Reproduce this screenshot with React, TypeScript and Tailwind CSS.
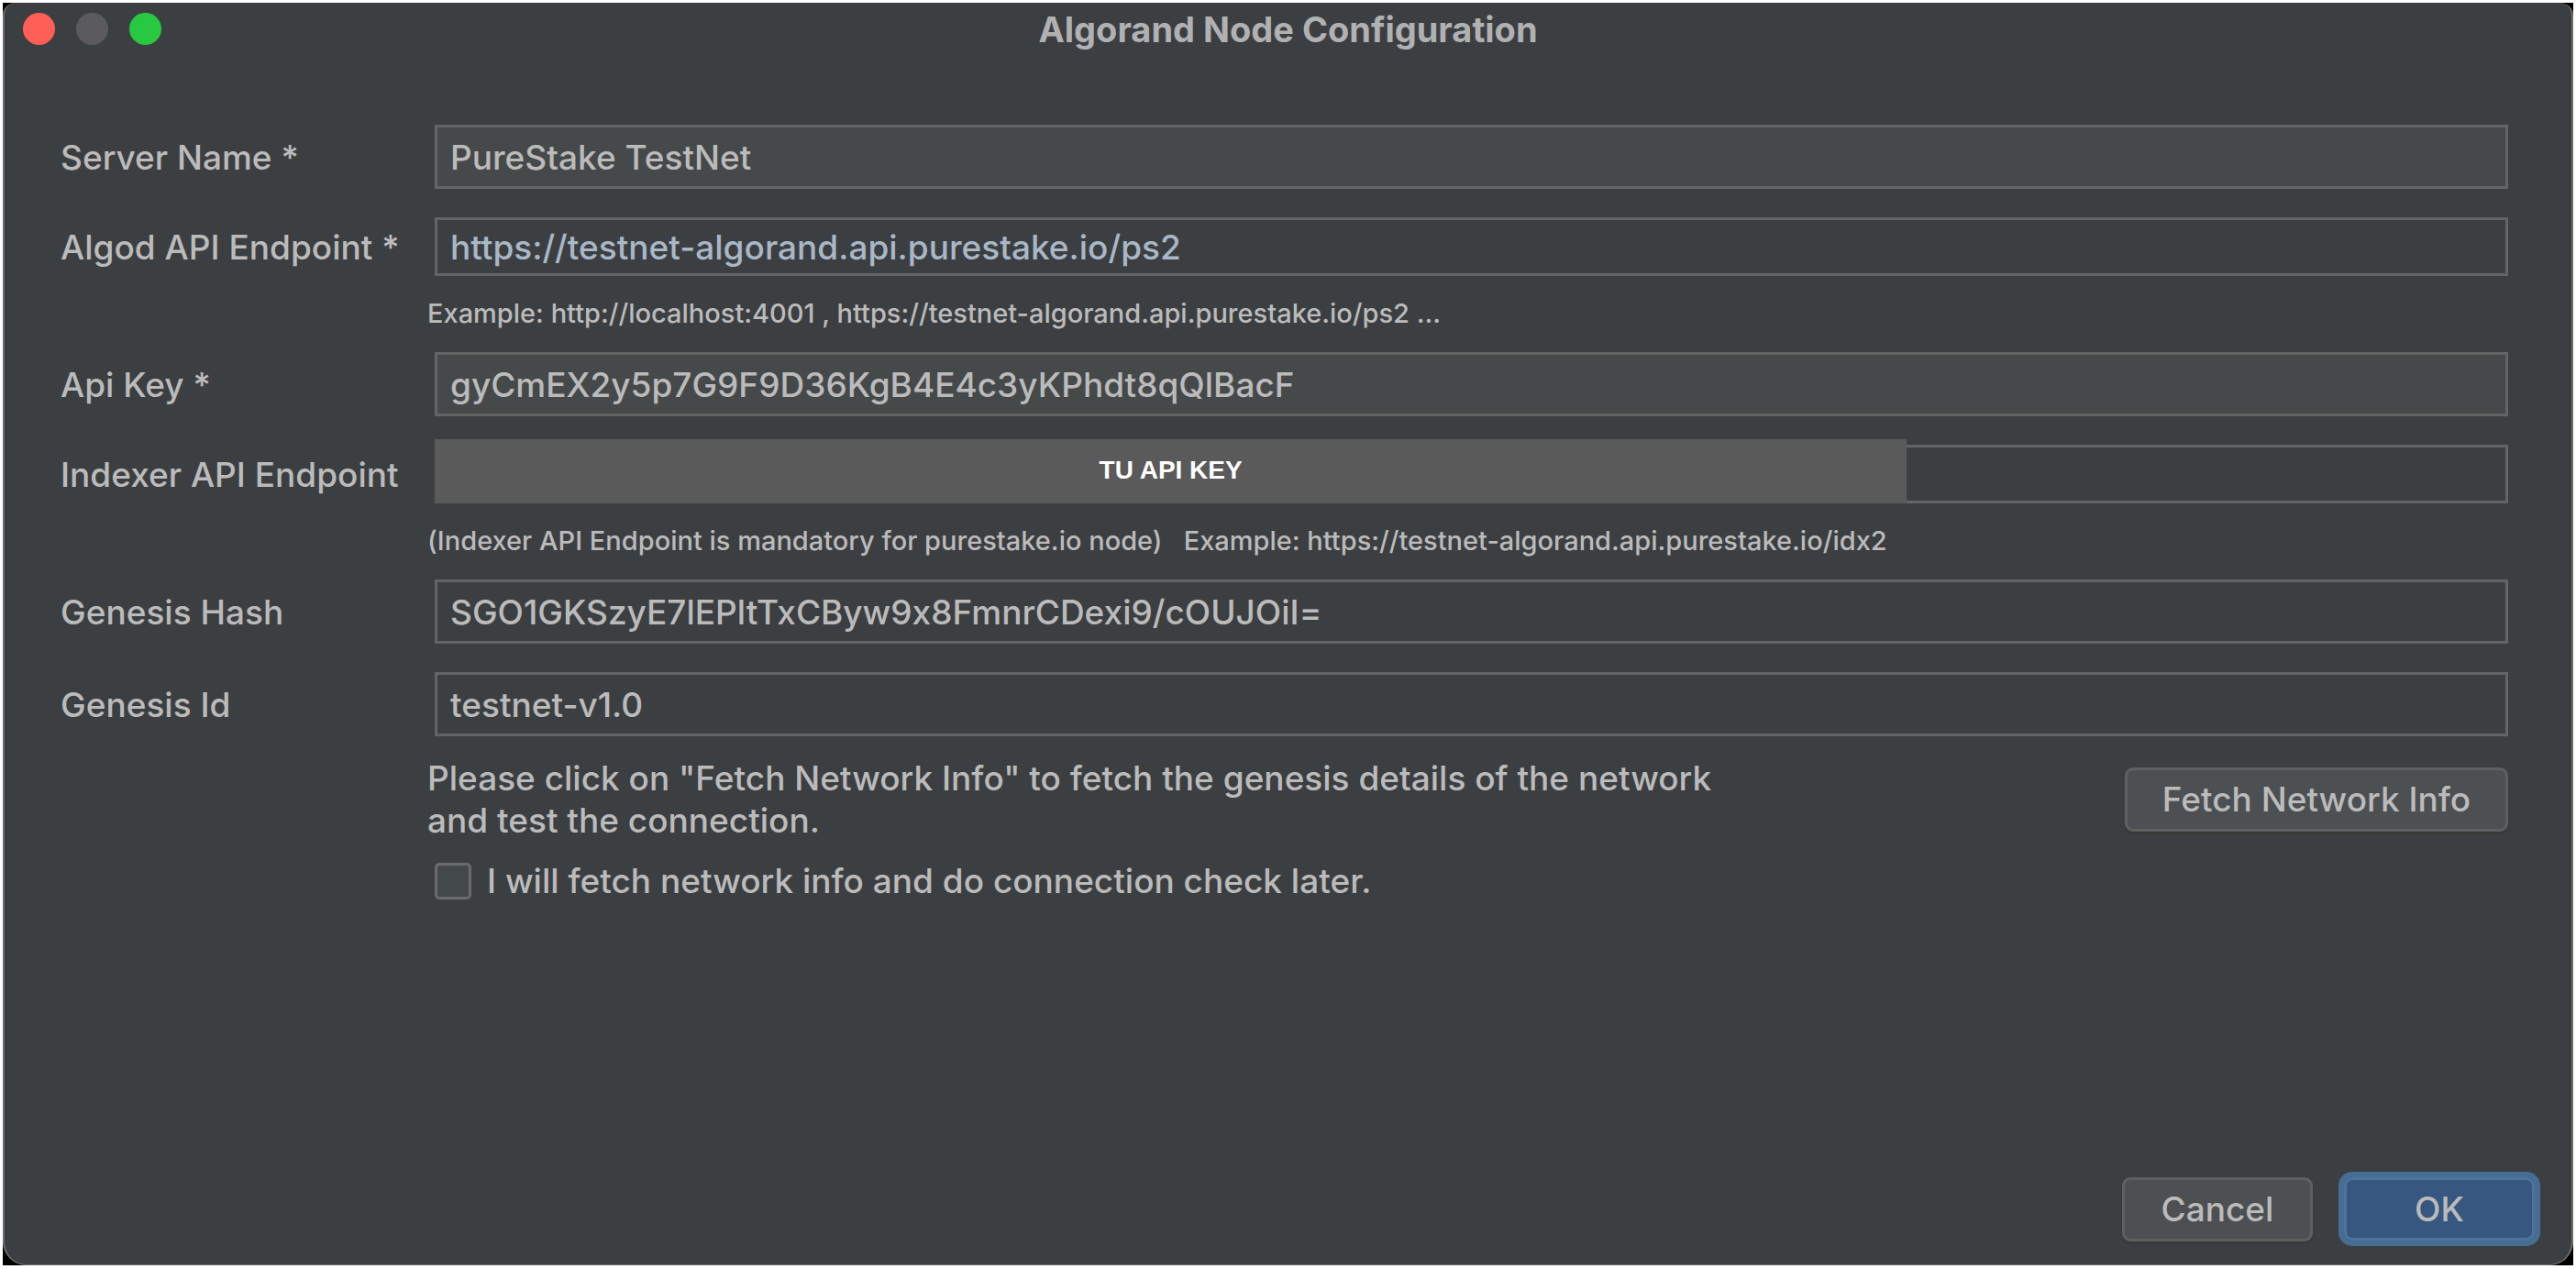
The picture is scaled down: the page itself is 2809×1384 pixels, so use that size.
import React from "react";

type FieldProps = {
  id: string;
  label: string;
  value?: string;
  className: string;
  children?: React.ReactNode;
};

function Field({ id, label, value = "", className, children }: FieldProps) {
  return (
    <div className="flex items-center">
      <label htmlFor={id} className="w-[408px] shrink-0 whitespace-nowrap pt-0.5">
        {label}
      </label>
      <div className="relative flex min-w-0 flex-1">
        <input
          id={id}
          type="text"
          defaultValue={value}
          spellCheck={false}
          className={`w-full min-w-0 border-3 border-[#646464] px-3.5 outline-none ${className}`}
        />
        {children}
      </div>
    </div>
  );
}

function Hint({ children }: { children: React.ReactNode }) {
  return (
    <p className="flex h-[83px] items-center whitespace-pre pb-0.5 pl-[400px] text-[29px] leading-9">
      {children}
    </p>
  );
}

const tall = "h-[70px] bg-[#45494a]";
const tallPlain = "h-[70px] bg-[#3c3f41]";
const short = "h-16 bg-[#3c3f41]";

const plainButton =
  "h-[70px] rounded-[9px] border-3 border-[#5e6060] bg-[#4c5052] shadow-[0_3px_2px_#373939]";

export default function App() {
  return (
    <div className="flex min-h-screen bg-white pt-[3px] pr-[3px] pb-1 pl-[3px] font-['Inter',sans-serif] text-[37px] leading-[46px] font-medium text-[#bbbbbb] [font-feature-settings:'calt'_0]">
      <div className="flex flex-1 bg-black">
        <main className="flex flex-1 flex-col rounded-t-[14px] rounded-b-[26px] border-x-2 border-b border-[#6c6e70] bg-[#3c3f41]">
          <header className="grid h-[55px] grid-cols-[1fr_auto_1fr] items-center pt-0.5">
            <div className="flex gap-[23px] pl-5">
              <button type="button" aria-label="Close" className="size-[35px] rounded-full bg-[#ff5f57]" />
              <button type="button" aria-label="Minimize" className="size-[35px] rounded-full bg-[#5b5b5d]" />
              <button type="button" aria-label="Zoom" className="size-[35px] rounded-full bg-[#28c840]" />
            </div>
            <h1 className="text-[38px] font-bold text-[#b0b1b2]">Algorand Node Configuration</h1>
          </header>

          <form className="flex flex-1 flex-col pt-[78px]" onSubmit={(e) => e.preventDefault()}>
            <div className="flex flex-col pr-[69px] pl-[61px]">
              <Field id="server" label="Server Name *" value="PureStake TestNet" className={tall} />
              <div className="h-[31px]" />
              <Field
                id="algod"
                label="Algod API Endpoint *"
                value="https://testnet-algorand.api.purestake.io/ps2"
                className={`${short} text-[#a9b7c6]`}
              />
              <Hint>Example: http://localhost:4001 , https://testnet-algorand.api.purestake.io/ps2 ...</Hint>
              <Field id="key" label="Api Key *" value="gyCmEX2y5p7G9F9D36KgB4E4c3yKPhdt8qQlBacF" className={tall} />
              <div className="h-[31px]" />
              <Field id="indexer" label="Indexer API Endpoint" className={short}>
                <div className="absolute bottom-0 left-0 flex h-[70px] w-[71%] items-center justify-center bg-[#5a5a5a] pb-0.5 font-['Liberation_Sans',Arial,sans-serif] text-[28px] font-bold text-white">
                  TU API KEY
                </div>
              </Field>
              <Hint>
                {"(Indexer API Endpoint is mandatory for purestake.io node)   Example: https://testnet-algorand.api.purestake.io/idx2"}
              </Hint>
              <Field
                id="hash"
                label="Genesis Hash"
                value="SGO1GKSzyE7lEPltTxCByw9x8FmnrCDexi9/cOUJOiI="
                className={tallPlain}
              />
              <div className="h-[31px]" />
              <Field id="genesis" label="Genesis Id" value="testnet-v1.0" className={tallPlain} />

              <div className="mt-[23px] flex items-center justify-between pl-[400px]">
                <p>
                  Please click on "Fetch Network Info" to fetch the genesis details of the network
                  <br />
                  and test the connection.
                </p>
                <button type="button" className={`${plainButton} w-[418px]`}>
                  Fetch Network Info
                </button>
              </div>

              <div className="mt-5 flex items-center gap-[17px] pl-[408px]">
                <input
                  id="later"
                  type="checkbox"
                  className="size-10 appearance-none rounded-[5px] border-3 border-[#6b6b6b] bg-[#43494a]"
                />
                <label htmlFor="later">I will fetch network info and do connection check later.</label>
              </div>
            </div>

            <footer className="mt-auto flex items-center justify-end gap-7 pr-[34px] pb-5">
              <button type="button" className={`${plainButton} w-[208px]`}>
                Cancel
              </button>
              <button
                type="submit"
                className="h-[81px] w-[220px] rounded-[15px] border-6 border-[#466d94] bg-[#365880] shadow-[inset_0_0_0_3px_#4f749c]"
              >
                OK
              </button>
            </footer>
          </form>
        </main>
      </div>
    </div>
  );
}
